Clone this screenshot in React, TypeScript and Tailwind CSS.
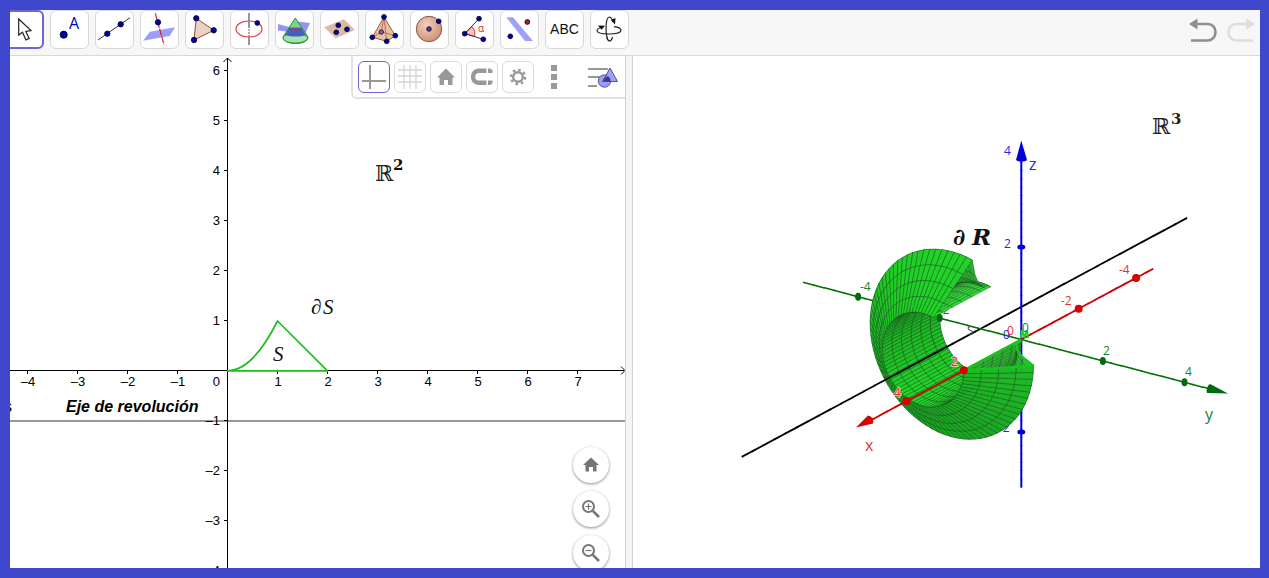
import type { ReactNode } from "react";

const SANS = '"Liberation Sans", Arial, sans-serif';
const OPEN = '"Open Sans", sans-serif';
const SERIF = '"Liberation Serif", serif';
const MATH = '"DejaVu Serif", "DejaVu Sans", serif';

// ---------- toolbar ----------

function Dot({ x, y, r = 2.7, fill = "#0000a0" }: { x: number; y: number; r?: number; fill?: string }) {
  return <circle cx={x} cy={y} r={r} fill={fill} stroke="#000030" strokeWidth="0.8" />;
}

const TOOLS: { name: string; icon: ReactNode }[] = [
  {
    name: "Move",
    icon: <path d="M13.7 9v16l3.8-2.8 3.4 7.8 3.3-1.6-3.4-7 5.2-.9z" fill="#fff" stroke="#222" strokeWidth="1.2" />,
  },
  {
    name: "Point",
    icon: (
      <>
        <Dot x={13.7} y={24.7} r={3.6} />
        <text x="19" y="19" fontSize="16" fontFamily={OPEN} fill="#0000d0">A</text>
      </>
    ),
  },
  {
    name: "Line",
    icon: (
      <>
        <path d="M3 30 35 7.7" stroke="#333" />
        <Dot x={12.3} y={23.7} />
        <Dot x={25.7} y={14.3} />
      </>
    ),
  },
  {
    name: "Perpendicular line",
    icon: (
      <>
        <path d="M3 30.7 10 21.7 35 17.3 29.7 26z" fill="#9c9cff" />
        <path d="M15.3 3.3 24 34.7" stroke="#e02020" strokeWidth="1.2" strokeDasharray="7 1" />
        <Dot x={18} y={12.3} />
      </>
    ),
  },
  {
    name: "Polygon",
    icon: (
      <>
        <path d="M11.3 8.3 28.7 20.3 9 30z" fill="#ecd2c6" stroke="#9a4a28" />
        <Dot x={11.3} y={8.3} />
        <Dot x={28.7} y={20.3} />
        <Dot x={9} y={30} />
      </>
    ),
  },
  {
    name: "Circle with axis",
    icon: (
      <>
        <ellipse cx="19" cy="19" rx="13" ry="8" stroke="#e03040" strokeWidth="1.1" />
        <path d="M19 3v15M19 26v9" stroke="#8c8c8c" strokeWidth="1.8" />
        <path d="M19 19v7" stroke="#8c8c8c" strokeWidth="1.4" strokeDasharray="2 1" />
        <Dot x={27.3} y={13} r={2.4} />
      </>
    ),
  },
  {
    name: "Intersect two surfaces",
    icon: (
      <>
        <path d="M3 14 14 17 19 11 35 13 30 24 3 20.5z" fill="#9595ee" />
        <path d="M20.3 8 8 27c0 4 5 6.5 12.500 6.500S33 31 33 27z" fill="#7fd28a" stroke="#2c9440" />
        <ellipse cx="20.3" cy="28" rx="12.3" ry="5" fill="#a5e5ac" stroke="#2c9440" />
        <path d="M14.500 17.500h11.500l5 7.500c-6 2-15 2-21 0z" fill="#4162c4" />
        <path d="M14 18.500c3 2.500 10 2.500 13 0" stroke="#c03030" />
      </>
    ),
  },
  {
    name: "Plane through 3 points",
    icon: (
      <>
        <path d="M4 17.3 24 9.3 35 20 15.7 28.3z" fill="#deb9a6" />
        <Dot x={18.3} y={15.3} r={2.4} />
        <Dot x={27} y={19.3} r={2.4} />
        <Dot x={16.3} y={22.3} r={2.4} />
      </>
    ),
  },
  {
    name: "Pyramid",
    icon: (
      <>
        <path d="M19 7 7.3 27.3 21.7 31.3 30.3 25.7z" fill="#e6bfa9" stroke="#a35a35" />
        <path d="M19 7 21.7 31.3M19 7 16.3 22M7.3 27.3 16.3 22 30.3 25.7" stroke="#b06a48" strokeWidth="0.9" />
        <Dot x={16.3} y={22} r={2.2} fill="#8a6a90" />
        <Dot x={19} y={7} r={2.4} />
        <Dot x={7.3} y={27.3} r={2.4} />
        <Dot x={21.7} y={31.3} r={2.4} />
        <Dot x={30.3} y={25.7} r={2.4} />
      </>
    ),
  },
  {
    name: "Sphere",
    icon: (
      <>
        <defs>
          <radialGradient id="ball" cx="0.4" cy="0.35" r="0.7">
            <stop offset="0" stopColor="#efd0bf" />
            <stop offset="1" stopColor="#cd8f70" />
          </radialGradient>
        </defs>
        <circle cx="19" cy="19" r="12.7" fill="url(#ball)" stroke="#8a5a44" />
        <Dot x={19} y={19} r={2.3} fill="#5a3a80" />
        <Dot x={28.7} y={11.3} r={2.4} />
      </>
    ),
  },
  {
    name: "Angle",
    icon: (
      <>
        <path d="M9.7 23.7 17 16.5a10.3 10.3 0 0 1 2.800 9.800z" fill="#f6c4c4" stroke="#e03030" strokeWidth="0.9" />
        <path d="M24 8.7 9.7 23.7 28.3 29.3" stroke="#333" />
        <text x="23" y="22" fontSize="10" fontFamily={OPEN} fill="#e02020">α</text>
        <Dot x={9.7} y={23.7} r={2.4} />
        <Dot x={24} y={8.7} r={2.4} />
        <Dot x={28.3} y={29.3} r={2.4} />
      </>
    ),
  },
  {
    name: "Reflect about plane",
    icon: (
      <>
        <path d="M6.3 7.3H13L33 31H25z" fill="#a0a0fa" />
        <Dot x={27.3} y={12} r={2.4} fill="#c01020" />
        <Dot x={10.3} y={26.3} r={2.4} />
      </>
    ),
  },
  {
    name: "Text",
    icon: <text x="19.5" y="24" textAnchor="middle" fontSize="14" fontFamily={SANS} fill="#111">ABC</text>,
  },
  {
    name: "Rotate 3D view",
    icon: (
      <>
        <path d="M12 17c-3 1-5 2-5 3.500C7 23 12 24 19 24s12-1.500 12-3.800c0-1.700-3-3-7-3.500" stroke="#222" strokeWidth="1.2" />
        <path d="M23 12c-1-3-2-5-3.500-5C17 7 16 13 16 19s1 8 1.500 9.500M16.500 27c1 3 2 4 3 4 1.500 0 2.500-2 3-4" stroke="#222" strokeWidth="1.2" />
        <path d="M8 15.500l7 .2-3.500 4zM21 10l4.500-2-.5 6.500z" fill="#111" />
      </>
    ),
  },
];

function Toolbar() {
  return (
    <header className="flex h-[46px] flex-none justify-between border-b border-[#d8d8d8] bg-[#f7f7f7]">
      <div className="-ml-[5px] flex gap-1.5">
        {TOOLS.map((tool, i) => (
          <button
            key={tool.name}
            aria-label={tool.name}
            className={
              i === 0
                ? "h-[39px] w-[39px] flex-none rounded-md border-2 border-[#6b66d0] bg-white"
                : "h-[39px] w-[39px] flex-none rounded-md border border-[#d8d8d8] bg-white"
            }
          >
            <svg viewBox={i === 0 ? "2 2 35 35" : "1 1 37 37"} className="h-full w-full" fill="none">
              {tool.icon}
            </svg>
          </button>
        ))}
      </div>
      <div className="flex gap-2 pt-2 pr-[5px]">
        <button aria-label="Undo" className="h-6 w-[29px] text-[#8f8f8f]">
          <svg viewBox="0 0 29 24" fill="none">
            <path d="M7 6h12c4.500 0 7.500 3.500 7.500 8s-3 8.500-7.500 8.500H2" stroke="currentColor" strokeWidth="2.6" />
            <path d="M0 6 8.500.5v11z" fill="currentColor" />
          </svg>
        </button>
        <button aria-label="Redo" className="h-6 w-[29px] text-[#dedede]">
          <svg viewBox="0 0 29 24" fill="none">
            <path d="M22 6H10c-4.500 0-7.500 3.500-7.500 8s3 8.500 7.500 8.500h17" stroke="currentColor" strokeWidth="2.6" />
            <path d="M29 6 20.500.5v11z" fill="currentColor" />
          </svg>
        </button>
      </div>
    </header>
  );
}

// ---------- 2D view ----------

const STYLE_BUTTONS: { name: string; icon: ReactNode }[] = [
  { name: "Show axes", icon: <path d="M12 4v24M4 20h24" stroke="#999" strokeWidth="2" /> },
  {
    name: "Show grid",
    icon: <path d="M10 4v24M16 4v24M22 4v24M4 9h24M4 15h24M4 21h24" stroke="#d4d4d4" strokeWidth="1.3" />,
  },
  { name: "Standard view", icon: <path d="M16 7.500 7 16.500h2.500V24h4.500v-5h4v5h4.500v-7.500H25z" fill="#999" /> },
  {
    name: "Snap to grid",
    icon: (
      <>
        <path d="M20.500 9.700H13c-3.500 0-6 2.300-6 6s2.500 6 6 6h7.500" stroke="#999" strokeWidth="4.400" />
        <path d="M22 7.500h2l2.500 1.500v3H22zM22 19.500h4.500v3l-2.500 1.500h-2z" fill="#999" />
      </>
    ),
  },
  {
    name: "Settings",
    icon: (
      <>
        <circle cx="16" cy="16" r="4.800" stroke="#999" strokeWidth="2.400" />
        <circle cx="16" cy="16" r="7" stroke="#999" strokeWidth="2.600" strokeDasharray="2.500 3" />
      </>
    ),
  },
];

function StyleBar() {
  return (
    <div className="absolute top-0 right-0 flex h-[43px] w-[274px] items-start rounded-bl-md border-b-2 border-l-2 border-[#e2e2e2] bg-white pt-[5px] pl-[5px]">
      <div className="flex gap-1">
        {STYLE_BUTTONS.map((b, i) => (
          <button
            key={b.name}
            aria-label={b.name}
            className={
              i === 0
                ? "h-8 w-8 rounded-md border border-[#6b66d0] bg-white"
                : "h-8 w-8 rounded-md border border-[#dcdcdc] bg-white"
            }
          >
            <svg viewBox="1 1 30 30" className="h-full w-full" fill="none">
              {b.icon}
            </svg>
          </button>
        ))}
      </div>
      <button aria-label="More" className="ml-1 flex h-8 w-8 flex-col items-center justify-center gap-[3px]">
        <span className="h-1.5 w-1.5 bg-[#999]" />
        <span className="h-1.5 w-1.5 bg-[#999]" />
        <span className="h-1.5 w-1.5 bg-[#999]" />
      </button>
      <button aria-label="Properties" className="ml-4 h-8 w-8">
        <svg viewBox="0 0 32 32" fill="none">
          <path d="M2 8h20M2 16h12M2 25h9" stroke="#999" strokeWidth="2.2" />
          <circle cx="18.500" cy="20" r="6.200" fill="#9a9aff" stroke="#5a5a80" />
          <path d="M24 7 31.500 20.500h-15z" fill="#8a8af8" fillOpacity="0.8" stroke="#55557c" />
          <path d="M17 20.500c1.500-3.500 3-5 4.500-5s3 3 2.800 5z" fill="#3a3a80" />
        </svg>
      </button>
    </div>
  );
}

function ZoomButton({ name, children }: { name: string; children: ReactNode }) {
  return (
    <button
      aria-label={name}
      className="flex h-9 w-9 items-center justify-center rounded-full bg-white shadow-[0_1px_3px_rgba(0,0,0,0.45)]"
    >
      <svg viewBox="0 0 36 36" className="h-9 w-9" fill="none">
        {children}
      </svg>
    </button>
  );
}

function Lens({ sign }: { sign: string }) {
  return (
    <>
      <circle cx="15.500" cy="15.500" r="5.500" stroke="#757575" strokeWidth="2" />
      <path d="m19.800 19.800 6.200 6.200" stroke="#757575" strokeWidth="2.600" />
      <path d={sign} stroke="#757575" strokeWidth="1.200" />
    </>
  );
}

// one unit is 50px, origin at (227.5, 370.5)
function GraphicsView() {
  const xs = [-4, -3, -2, -1, 1, 2, 3, 4, 5, 6, 7];
  const ys = [6, 5, 4, 3, 2, 1, -1, -2, -3, -4];
  const label = (n: number) => (n < 0 ? `–${-n}` : `${n}`);
  return (
    <section className="relative min-w-0 overflow-hidden bg-white">
      <svg viewBox="10 56 615 512" preserveAspectRatio="xMidYMid slice" className="absolute h-full w-full" fill="none">
        <path d="M10 421h616" stroke="#999" strokeWidth="2" />
        <path d="M10 370.5h614M227.5 58v510M621 366.5l4 4-4 4M223.5 62l4-4 4 4" stroke="#000" />
        <g fontFamily={SANS} fontSize="13" fill="#000">
          {xs.map((n) => (
            <g key={n}>
              <path d={`M${227.5 + n * 50} 370v4`} stroke="#000" />
              <text x={228 + n * 50} y="386" textAnchor="middle">{label(n)}</text>
            </g>
          ))}
          {ys.map((n) => (
            <g key={n}>
              <path d={`M224 ${370.5 - n * 50}h4`} stroke="#000" />
              <text x="220" y={375 - n * 50} textAnchor="end">{label(n)}</text>
            </g>
          ))}
          <text x="220" y="386" textAnchor="end">0</text>
        </g>
        <path
          d="M227.5 370.8Q252.5 370.8 277.5 321L327.5 370.8z"
          stroke="#1fbf1f"
          strokeWidth="1.7"
          strokeLinejoin="round"
        />
        <text x="4" y="412" fontFamily={SANS} fontSize="16" fill="#000">s</text>
        <text x="66" y="412" fontFamily={SANS} fontSize="16" fontWeight="700" fontStyle="italic" fill="#000">
          Eje de revolución
        </text>
        <g fontFamily={SERIF} fontSize="21" fontStyle="italic" fill="#111">
          <text x="273" y="361">S</text>
          <text x="311" y="314">∂</text>
          <text x="323" y="314">S</text>
        </g>
        <text x="375" y="181" fontFamily={MATH} fontSize="22" fill="#222">ℝ</text>
        <text x="393" y="170" fontFamily={MATH} fontSize="15" fontWeight="700" fill="#111">2</text>
      </svg>
      <StyleBar />
      <div className="absolute right-4 -bottom-[3px] flex flex-col gap-2">
        <ZoomButton name="Home">
          <path d="M18 10.500 10 18h2.500v6.500H16V20h4v4.500h3.500V18H26z" fill="#757575" />
        </ZoomButton>
        <ZoomButton name="Zoom in">
          <Lens sign="M12.500 15.500h6M15.500 12.500v6" />
        </ZoomButton>
        <ZoomButton name="Zoom out">
          <Lens sign="M12.500 15.500h6" />
        </ZoomButton>
      </div>
    </section>
  );
}

// ---------- 3D view ----------

type V3 = [number, number, number];
type Item = { depth: number; node: ReactNode };

const project = ([x, y, z]: V3) => [1021.3 - 28.7 * x + 40.8 * y, 339.5 + 15.4 * x + 10.7 * y - 46.3 * z];
const depthOf = ([x, y, z]: V3) => 0.756 * x + 0.532 * y + 0.374 * z;
const fmt = (p: V3) => project(p).map((c) => c.toFixed(1)).join(",");

const END = (-284.6 * Math.PI) / 180;
const STEPS = 66;

// profile point (x, y) turned by t around the line y = -1
const revolve = (x: number, y: number, t: number): V3 => [x, -1 + (y + 1) * Math.cos(t), (y + 1) * Math.sin(t)];

const PROFILES: [number, number][][] = [
  [0, 1, 2, 3, 4].map((i) => [i / 4, (i / 4) ** 2]),
  [0, 1, 2, 3, 4].map((i) => [1 + i / 4, 1 - i / 4]),
  [0, 1, 2, 3, 4, 5, 6].map((i) => [i / 3, 0]),
];

function shade(a: V3, b: V3, c: V3) {
  const u = [b[0] - a[0], b[1] - a[1], b[2] - a[2]];
  const v = [c[0] - a[0], c[1] - a[1], c[2] - a[2]];
  const n: V3 = [u[1] * v[2] - u[2] * v[1], u[2] * v[0] - u[0] * v[2], u[0] * v[1] - u[1] * v[0]];
  const len = Math.hypot(...n) || 1;
  const up = (Math.sign(depthOf(n)) * (n[2] + 0.3 * n[0])) / len;
  const k = Math.max(0, Math.min(1, 0.5 + 0.5 * up));
  return `rgb(${Math.round(24 + 10 * k)},${Math.round(145 + 70 * k)},${Math.round(32 + 8 * k)})`;
}

function surface(): Item[] {
  const items: Item[] = [];
  PROFILES.forEach((profile, s) => {
    for (let i = 0; i < profile.length - 1; i++) {
      for (let j = 0; j < STEPS; j++) {
        const t0 = (END * j) / STEPS;
        const t1 = (END * (j + 1)) / STEPS;
        const [x0, y0] = profile[i];
        const [x1, y1] = profile[i + 1];
        const quad = [revolve(x0, y0, t0), revolve(x1, y1, t0), revolve(x1, y1, t1), revolve(x0, y0, t1)];
        items.push({
          depth: quad.reduce((sum, p) => sum + depthOf(p), 0) / 4,
          node: (
            <polygon
              key={`${s}-${i}-${j}`}
              points={quad.map(fmt).join(" ")}
              fill={shade(quad[0], quad[1], quad[2])}
              fillOpacity="0.95"
              stroke="#1c4420"
              strokeOpacity="0.75"
              strokeWidth="0.5"
            />
          ),
        });
      }
    }
  });
  return items;
}

// straight lines are cut up so that they sort with the faces
function line(name: string, from: V3, to: V3, color: string, width: number): Item[] {
  const n = 40;
  const at = (k: number): V3 => [
    from[0] + ((to[0] - from[0]) * k) / n,
    from[1] + ((to[1] - from[1]) * k) / n,
    from[2] + ((to[2] - from[2]) * k) / n,
  ];
  return Array.from({ length: n }, (_, k) => ({
    depth: depthOf(at(k + 0.5)),
    node: (
      <polyline
        key={`${name}-${k}`}
        points={`${fmt(at(k))} ${fmt(at(Math.min(n, k + 1.1)))}`}
        stroke={color}
        strokeWidth={width}
      />
    ),
  }));
}

const SCENE = [
  ...surface(),
  ...line("x", [-4.6, 0, 0], [5.4, 0, 0], "#cc0000", 1.8),
  ...line("y", [0, -5.35, 0], [0, 4.7, 0], "#007000", 1.6),
  ...line("z", [0, 0, -3.2], [0, 0, 4], "#0000d8", 2),
  ...line("axis", [-7.2, -1, 0], [8.32, -1, 0], "#000", 1.8),
].sort((a, b) => a.depth - b.depth);

function Label({ x, y, color, children }: { x: number; y: number; color: string; children: ReactNode }) {
  return <text x={x} y={y} fill={color}>{children}</text>;
}

function View3D() {
  const red = "#e83030";
  const green = "#20802c";
  const blue = "#2828dc";
  const rim = ([...PROFILES[0], ...PROFILES[1], [0, 0]] as [number, number][])
    .map(([x, y]) => fmt([x, y, 0]))
    .join(" ");
  return (
    <section className="relative min-w-0 overflow-hidden bg-white">
      <svg viewBox="633 56 627 512" preserveAspectRatio="xMidYMid slice" className="absolute h-full w-full" fill="none">
        <g fontFamily={OPEN} fontSize="12">
          <Label x={999} y={432} color={blue}>-2</Label>
          <Label x={939} y={314} color={green}>-2</Label>
        </g>
        {SCENE.map((item) => item.node)}
        <polyline points={rim} stroke="#14c81c" strokeWidth="2.2" strokeLinejoin="round" />
        <path d="M1021 338l1-8 2.500 7 2.500-7 1 8" stroke="#14d81c" strokeWidth="2" />
        <g fill="#d80000">
          {[-4, -2, 2, 4].map((n) => (
            <circle key={n} cx={project([n, 0, 0])[0]} cy={project([n, 0, 0])[1]} r="4" />
          ))}
          <path d="M856 427.5 868 415.500c4 1 6 4 5 8z" />
        </g>
        <g fill="#006a10">
          {[-4, -2, 2, 4].map((n) => (
            <ellipse key={n} cx={project([0, n, 0])[0]} cy={project([0, n, 0])[1]} rx="3" ry="4" />
          ))}
          <path d="M1228 393.500 1210 384c-3 2-4 6-3 9z" />
        </g>
        <g fill="#0000d8">
          {[-2, 2].map((n) => (
            <ellipse key={n} cx={project([0, 0, n])[0]} cy={project([0, 0, n])[1]} rx="4" ry="2.5" />
          ))}
          <path d="M1021.300 140.500 1016 160c2 2 9 2 11 0z" />
        </g>
        <g fontFamily={OPEN} fontSize="12">
          <Label x={1004} y={155} color={blue}>4</Label>
          <Label x={1004} y={248} color={blue}>2</Label>
          <Label x={1003} y={339} color={blue}>0</Label>
          <Label x={1007} y={335} color={red}>0</Label>
          <Label x={1022} y={332} color={green}>0</Label>
          <Label x={1119} y={274} color={red}>-4</Label>
          <Label x={1061} y={305} color={red}>-2</Label>
          <Label x={860} y={291} color={green}>-4</Label>
          <Label x={1103} y={355} color={green}>2</Label>
          <Label x={1185} y={376} color={green}>4</Label>
          <Label x={967} y={335} color="#444">S</Label>
        </g>
        <g fontFamily={OPEN} fontSize="12" stroke="#f6c8c0" strokeWidth="1.5" paintOrder="stroke">
          <Label x={951} y={366} color={red}>2</Label>
          <Label x={894} y={397} color={red}>4</Label>
        </g>
        <g fontFamily={OPEN} fontSize="16">
          <Label x={1029} y={170} color={blue}>z</Label>
          <Label x={865} y={451} color={red}>x</Label>
          <Label x={1205} y={420} color={green}>y</Label>
        </g>
        <g fontFamily={MATH} fontSize="23" fontWeight="700" fontStyle="italic" fill="#111">
          <text x="953" y="245">∂</text>
          <text x="972" y="245">R</text>
        </g>
        <text x="1152" y="134" fontFamily={MATH} fontSize="22" fill="#222">ℝ</text>
        <text x="1171" y="124" fontFamily={MATH} fontSize="15" fontWeight="700" fill="#222">3</text>
      </svg>
    </section>
  );
}

export default function App() {
  return (
    <div className="h-screen overflow-hidden bg-[#3f47cc] py-2.5 pr-[9px] pl-2.5">
      <div className="flex h-full flex-col overflow-hidden bg-white">
        <Toolbar />
        <main className="grid min-h-0 flex-1 grid-cols-[615fr_8px_627fr]">
          <GraphicsView />
          <div className="border-x border-[#d0d0d0] bg-[#f5f5f5]" />
          <View3D />
        </main>
      </div>
    </div>
  );
}
